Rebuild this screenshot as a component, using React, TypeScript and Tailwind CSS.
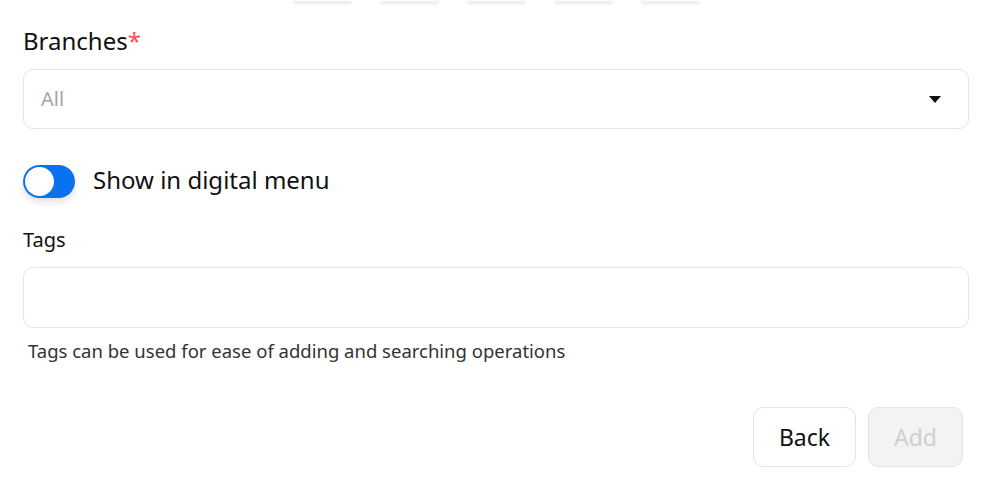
import { useState } from "react";

const thumbs = [0, 1, 2, 3, 4];

export default function App() {
    const [showInMenu, setShowInMenu] = useState(true);

    return <div className="w-[995px] h-[502px] bg-white overflow-hidden text-[#111] font-['Noto_Sans',sans-serif]">
        <div className="flex gap-[28px] pl-[293px] h-[3px] items-end">
            {thumbs.map((t) => <div key={t} className="w-[59px] h-[2px] bg-[#efefef] rounded-b-md shadow-sm"></div>)}
        </div>
        <div className="px-[23px] pt-[22px]">
            <div className="text-[24px] leading-[32px]">Branches<span className="text-[#ff4d4f]">*</span></div>
            <div className="mt-[12px] w-[946px] h-[60px] border border-[#e4e4e4] rounded-[10px] flex items-center justify-between pl-[17px] pr-[27px]">
                <span className="text-[20px] text-[#a6a6a6]">All</span>
                <svg width="12" height="7" viewBox="0 0 12 7"><path d="M0 0h12L6 7z" fill="#111" /></svg>
            </div>
            <div className="mt-[36px] flex items-center gap-[18px]">
                <button onClick={() => setShowInMenu(!showInMenu)} className="w-[52px] h-[33px] rounded-full bg-[#0a72ef] p-[2px] flex items-center shadow-[0_4px_6px_rgba(0,0,0,0.12)]">
                    <span className="size-[29px] rounded-full bg-white block"></span>
                </button>
                <span className="text-[24px] leading-[32px] -translate-y-[2px]">Show in digital menu</span>
            </div>
            <div className="mt-[28px] text-[20px] leading-[28px]">Tags</div>
            <div className="mt-[13px] w-[946px] h-[61px] border border-[#e4e4e4] rounded-[10px]"></div>
            <div className="mt-[11px] pl-[5px] text-[18.5px] leading-[24px] text-[#333]">Tags can be used for ease of adding and searching operations</div>
            <div className="mt-[44px] flex justify-end gap-[12px] pr-[9px]">
                <button className="w-[103px] h-[60px] rounded-[10px] border border-[#e4e4e4] bg-white text-[23px]">Back</button>
                <button disabled className="w-[95px] h-[60px] rounded-[10px] border border-[#e4e4e4] bg-[#f3f3f3] text-[23px] text-[#cfcfcf]">Add</button>
            </div>
        </div>
    </div>
}
